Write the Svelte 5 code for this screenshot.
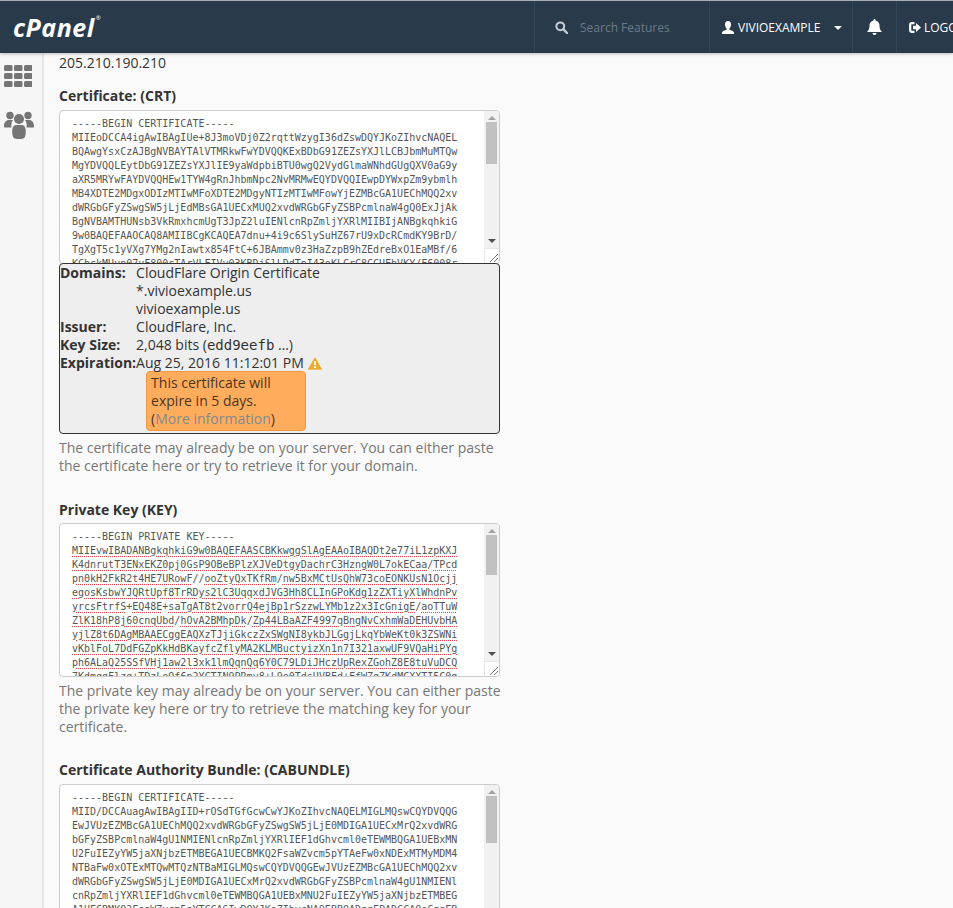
<script>
    const certificate = `-----BEGIN CERTIFICATE-----
MIIEoDCCA4igAwIBAgIUe+8J3moVDj0Z2rqttWzygI36dZswDQYJKoZIhvcNAQEL
BQAwgYsxCzAJBgNVBAYTAlVTMRkwFwYDVQQKExBDbG91ZEZsYXJlLCBJbmMuMTQw
MgYDVQQLEytDbG91ZEZsYXJlIE9yaWdpbiBTU0wgQ2VydGlmaWNhdGUgQXV0aG9y
aXR5MRYwFAYDVQQHEw1TYW4gRnJhbmNpc2NvMRMwEQYDVQQIEwpDYWxpZm9ybmlh
MB4XDTE2MDgxODIzMTIwMFoXDTE2MDgyNTIzMTIwMFowYjEZMBcGA1UEChMQQ2xv
dWRGbGFyZSwgSW5jLjEdMBsGA1UECxMUQ2xvdWRGbGFyZSBPcmlnaW4gQ0ExJjAk
BgNVBAMTHUNsb3VkRmxhcmUgT3JpZ2luIENlcnRpZmljYXRlMIIBIjANBgkqhkiG
9w0BAQEFAAOCAQ8AMIIBCgKCAQEA7dnu+4i9c6SlySuHZ67rU9xDcRCmdKY9BrD/
TgXgT5c1yVXg7YMg2nIawtx854FtC+6JBAmmv0z3HaZzpB9hZEdreBxO1EaMBf/6
KCbckMUyn07yF800cTArVLFIVy03KBDjSlLDdTpI43oKLCrC8CCUFbVKY/F6008r`;

    const privateKey = `-----BEGIN PRIVATE KEY-----
MIIEvwIBADANBgkqhkiG9w0BAQEFAASCBKkwggSlAgEAAoIBAQDt2e77iL1zpKXJ
K4dnrutT3ENxEKZ0pj0GsP9OBeBPlzXJVeDtgyDachrC3HzngW0L7okECaa/TPcd
pn0kH2FkR2t4HE7URowF//ooZtyQxTKfRm/nw5BxMCtUsQhW73coEONKUsN1Ocjj
egosKsbwYJQRtUpf8TrRDys2lC3UqqxdJVG3Hh8CLInGPoKdg1zZXTiyXlWhdnPv
yrcsFtrfS+EQ48E+saTgAT8t2vorrQ4ejBp1rSzzwLYMb1z2x3IcGnigE/aoTTuW
ZlK18hP8j60cnqUbd/hOvA2BMhpDk/Zp44LBaAZF4997qBngNvCxhmWaDEHUvbHA
yjlZ8t6DAgMBAAECggEAQXzTJjiGkczZxSWgNI8ykbJLGgjLkqYbWeKt0k3ZSWNi
vKblFoL7DdFGZpKkHdBKayfcZflyMA2KLMBuctyizXn1n7I321axwUF9VQaHiPYg
ph6ALaQ25SSfVHj1aw2l3xk1lmQqnQq6Y0C79LDiJHczUpRexZGohZ8E8tuVuDCQ
7KdmqgFlzg+TDzLeOf6p2YCTIN9PRmv8+L9e0TdsUVBEd+FfWZqZKdMCXXTI5C0g`;

    const caBundle = `-----BEGIN CERTIFICATE-----
MIID/DCCAuagAwIBAgIID+rOSdTGfGcwCwYJKoZIhvcNAQELMIGLMQswCQYDVQQG
EwJVUzEZMBcGA1UEChMQQ2xvdWRGbGFyZSwgSW5jLjE0MDIGA1UECxMrQ2xvdWRG
bGFyZSBPcmlnaW4gU1NMIENlcnRpZmljYXRlIEF1dGhvcml0eTEWMBQGA1UEBxMN
U2FuIEZyYW5jaXNjbzETMBEGA1UECBMKQ2FsaWZvcm5pYTAeFw0xNDExMTMyMDM4
NTBaFw0xOTExMTQwMTQzNTBaMIGLMQswCQYDVQQGEwJVUzEZMBcGA1UEChMQQ2xv
dWRGbGFyZSwgSW5jLjE0MDIGA1UECxMrQ2xvdWRGbGFyZSBPcmlnaW4gU1NMIENl
cnRpZmljYXRlIEF1dGhvcml0eTEWMBQGA1UEBxMNU2FuIEZyYW5jaXNjbzETMBEG
A1UECBMKQ2FsaWZvcm5pYTCCASIwDQYJKoZIhvcNAQEBBQADggEPADCCAQoCggEB`;

    // splits a line so the spellcheck squiggle skips + and /
    function tokens(line) {
        return line.split(/([+/]+)/).filter(Boolean);
    }
</script>

{#snippet pemBox(text, thumb, spell, cls)}
    <div class="pem {cls}">
        {#each text.split('\n') as line, i}
            <div class="pem-line">
                {#if spell && i > 0}
                    {#each tokens(line) as t}{#if /^[+/]+$/.test(t)}{t}{:else}<span class="typo">{t}</span>{/if}{/each}
                {:else}
                    {line}
                {/if}
            </div>
        {/each}
        <div class="scrollbar">
            <span class="arrow up"></span>
            <span class="thumb" style="height: {thumb}px"></span>
            <span class="arrow down"></span>
        </div>
        <div class="resizer">
            <svg width="15" height="15" viewBox="0 0 15 15"><path d="M5 13 13 5M9 13l4-4" stroke="#777" fill="none"/></svg>
        </div>
    </div>
{/snippet}

<div class="page">
    <header class="topbar">
        <div class="brand">
            <span class="logo">cPanel</span><span class="reg">®</span>
        </div>
        <div class="search item">
            <svg class="ico" width="13" height="13" viewBox="0 0 13 13"><circle cx="5.3" cy="5.3" r="3.9" fill="none" stroke="#c5ccd3" stroke-width="2"/><path d="M8.2 8.2 12 12" stroke="#c5ccd3" stroke-width="2.4" stroke-linecap="round"/></svg>
            <span class="placeholder">Search Features</span>
        </div>
        <div class="user item">
            <svg width="12" height="13" viewBox="0 0 12 13"><path d="M6 0C4 0 3 1.500 3 3.500 3 5.500 3.800 6.800 4.600 7.500V8.700C3 9.300.3 9.800 0 11.500V13H12V11.500C11.700 9.800 9 9.300 7.400 8.700V7.500C8.200 6.800 9 5.500 9 3.500 9 1.500 8 0 6 0Z" fill="#fff"/></svg>
            <span class="username">VIVIOEXAMPLE</span>
            <span class="caret"></span>
        </div>
        <div class="bell item">
            <svg width="15" height="16" viewBox="0 0 15 16"><path d="M7.500 0C6.900 0 6.500.4 6.500 1V1.500C4 2 2.500 4 2.500 6.500 2.500 10 1.500 11.500 0 13H15C13.500 11.500 12.500 10 12.500 6.500 12.500 4 11 2 8.500 1.500V1C8.500.4 8.100 0 7.500 0ZM5.500 14C5.500 15.100 6.400 16 7.500 16S9.500 15.100 9.500 14Z" fill="#fff"/></svg>
        </div>
        <div class="logout item">
            <svg width="12" height="11" viewBox="0 0 12 11"><path d="M5.500 1.200H2.500C1.700 1.200 1.200 1.700 1.200 2.500V8.500C1.200 9.300 1.700 9.800 2.500 9.800H5.500" fill="none" stroke="#fff" stroke-width="2.200"/><path d="M4 3.800H7V1L12 5.500 7 10V7.200H4Z" fill="#fff"/></svg>
            <span class="logout-text">LOGOUT</span>
        </div>
    </header>

    <div class="body">
        <nav class="sidebar">
            <svg width="28" height="22" viewBox="0 0 28 22" fill="#757575">
                {#each [0, 8, 16] as y}
                    {#each [0, 10, 20] as x}
                        <rect {x} {y} width="8.500" height="6" rx="1.500"/>
                    {/each}
                {/each}
            </svg>
            <svg width="30" height="28" viewBox="0 0 30 28" fill="#757575">
                <circle cx="6" cy="4.500" r="3.700"/>
                <circle cx="24" cy="4.500" r="3.700"/>
                <path d="M0 16C0 11 2 9 5 9H9C7.500 11 7 13 7.500 16.500H2C.8 16.500 0 16.500 0 16ZM30 16C30 11 28 9 25 9H21C22.500 11 23 13 22.500 16.500H28C29.200 16.500 30 16.500 30 16Z"/>
                <circle cx="15" cy="8" r="5"/>
                <path d="M8.500 24C7.500 18 9 14 12 14H18C21 14 22.500 18 21.500 24 21.200 27 19 28 17 28H13C11 28 8.800 27 8.500 24Z"/>
            </svg>
        </nav>

        <main class="content">
            <p class="ip">205.210.190.210</p>

            <label class="field-label" for="crt">Certificate: (CRT)</label>
            {@render pemBox(certificate, 42, false, 'crt')}
            <div class="cert-info">
                <table>
                    <tbody>
                        <tr><th>Domains:</th><td>CloudFlare Origin Certificate<br>*.vivioexample.us<br>vivioexample.us</td></tr>
                        <tr><th>Issuer:</th><td>CloudFlare, Inc.</td></tr>
                        <tr><th>Key Size:</th><td>2,048 bits (<span class="mono">edd9eefb</span> …)</td></tr>
                        <tr class="expire">
                            <th>Expiration:</th>
                            <td>
                                Aug 25, 2016 11:12:01 PM
                                <svg class="warn" width="14" height="13" viewBox="0 0 16 14"><path d="M8 .5 15.500 13.500H.5Z" fill="#e8ac2c" stroke="#e8ac2c" stroke-linejoin="round"/><path d="M8 4.500V9M8 10.200V12" stroke="#fff" stroke-width="2"/></svg>
                                <div class="expire-note">This certificate will expire in 5 days. <span class="more">(<a href="#more">More information</a>)</span></div>
                            </td>
                        </tr>
                    </tbody>
                </table>
            </div>
            <p class="help">The certificate may already be on your server. You can either paste the certificate here or try to retrieve it for your domain.</p>

            <label class="field-label key-label" for="key">Private Key (KEY)</label>
            {@render pemBox(privateKey, 40, true, 'key')}
            <p class="help">The private key may already be on your server. You can either paste the private key here or try to retrieve the matching key for your certificate.</p>

            <label class="field-label" for="cab">Certificate Authority Bundle: (CABUNDLE)</label>
            {@render pemBox(caBundle, 47, false, 'cab')}
        </main>
    </div>
</div>

<style>
    :global(body) {
        margin: 0;
        background: #fafafa;
    }

    .page {
        height: 908px;
        overflow: hidden;
        display: flex;
        flex-direction: column;
        font-family: "Open Sans", sans-serif;
        font-size: 14px;
        line-height: 18px;
        color: #333;
    }

    .topbar {
        flex: none;
        height: 52px;
        border-top: 1px solid #a9afb5;
        display: flex;
        background: #293a4a;
        color: #fff;
        box-shadow: 0 1px 3px rgba(0, 0, 0, 0.25);
        position: relative;
    }

    .brand {
        flex: 0 0 534px;
        box-sizing: border-box;
        padding: 9px 0 0 13px;
        display: flex;
        align-items: flex-start;
    }

    .logo {
        font-family: "Open Sans", sans-serif;
        font-weight: 700;
        font-style: italic;
        font-size: 25px;
        line-height: 34px;
        letter-spacing: 0.5px;
    }

    .reg {
        font-size: 6px;
        line-height: 16px;
        margin-left: 1px;
    }

    .item {
        flex: none;
        box-sizing: border-box;
        display: flex;
        align-items: center;
        border-left: 1px solid #34475a;
    }

    .search {
        width: 175px;
        padding-left: 20px;
    }

    .placeholder {
        margin: 1px 0 0 12px;
        font-size: 12px;
        color: #6d7b88;
    }

    .user {
        width: 143px;
        padding-left: 12px;
        font-size: 12px;
    }

    .username {
        margin: 1px 0 0 4px;
    }

    .caret {
        margin-left: 14px;
        margin-top: 2px;
        border-top: 4px solid #fff;
        border-left: 4px solid transparent;
        border-right: 4px solid transparent;
    }

    .bell {
        width: 44px;
        justify-content: center;
    }

    .logout {
        padding-left: 12px;
        font-size: 12px;
        gap: 3px;
    }

    .logout-text {
        margin-top: 1px;
    }

    .body {
        flex: 1;
        display: flex;
        min-height: 0;
    }

    .sidebar {
        flex: none;
        box-sizing: border-box;
        width: 44px;
        padding: 12px 0 0 4px;
        display: flex;
        flex-direction: column;
        gap: 24px;
        background: #f6f6f6;
        border-right: 2px solid #e4e4e4;
    }

    .content {
        width: 441px;
        margin-left: 15px;
    }

    .ip {
        margin: 1px 0 0;
    }

    .field-label {
        display: block;
        margin-top: 15px;
        margin-bottom: 5px;
        font-weight: 700;
    }

    .pem {
        position: relative;
        box-sizing: border-box;
        height: 154px;
        padding: 6px 0 0 12px;
        overflow: hidden;
        background: #fff;
        border: 1px solid #ccc;
        border-radius: 4px;
        font-family: "DejaVu Sans Mono", monospace;
        font-size: 10px;
        line-height: 14px;
        color: #555;
        white-space: pre;
    }

    .pem.crt {
        margin-bottom: -1px;
    }

    .pem.cab {
        height: 300px;
    }

    .typo {
        text-decoration: underline dotted #e04040 1px;
        text-underline-offset: 2px;
    }

    .scrollbar {
        position: absolute;
        top: 0;
        right: 0;
        bottom: 0;
        width: 15px;
        background: #f1f1f1;
        display: flex;
        flex-direction: column;
        align-items: center;
    }

    .thumb {
        width: 11px;
        background: #c1c1c1;
        margin-top: 1px;
    }

    .arrow {
        flex: none;
        margin-top: 5px;
        border-left: 4px solid transparent;
        border-right: 4px solid transparent;
    }

    .arrow.up {
        border-bottom: 4px solid #a3a3a3;
        margin-bottom: 1px;
    }

    .arrow.down {
        position: absolute;
        bottom: 20px;
        border-top: 4px solid #505050;
    }

    .resizer {
        position: absolute;
        right: 0;
        bottom: 0;
        width: 15px;
        height: 15px;
        background: #fff;
        border-left: 1px solid #e6e6e6;
        border-top: 1px solid #e6e6e6;
        box-sizing: border-box;
    }

    .cert-info {
        position: relative;
        box-sizing: border-box;
        height: 171px;
        background: #eee;
        border: 1px solid #333;
        border-radius: 4px;
    }

    table {
        border-collapse: collapse;
    }

    th,
    td {
        padding: 0;
        text-align: left;
        vertical-align: top;
    }

    th {
        font-weight: 700;
    }

    .mono {
        font-family: "DejaVu Sans Mono", monospace;
        font-size: 14px;
        line-height: 0;
    }

    .warn {
        vertical-align: -2px;
        margin-left: 1px;
    }

    .expire-note {
        box-sizing: border-box;
        width: 160px;
        margin: -1px 0 0 10px;
        padding: 2px 4px;
        background: #ffad5c;
        border: 1px solid #f0963c;
        border-radius: 4px;
        color: #4a3520;
    }

    .more {
        white-space: nowrap;
    }

    .expire-note a {
        color: #7f8a90;
        text-decoration: none;
    }

    .help {
        margin: 5px -2px 0 0;
        color: #777;
    }

    .help + .field-label {
        margin-top: 25px;
    }

    .help + .field-label.key-label {
        margin-top: 26px;
        margin-bottom: 4px;
    }
</style>
